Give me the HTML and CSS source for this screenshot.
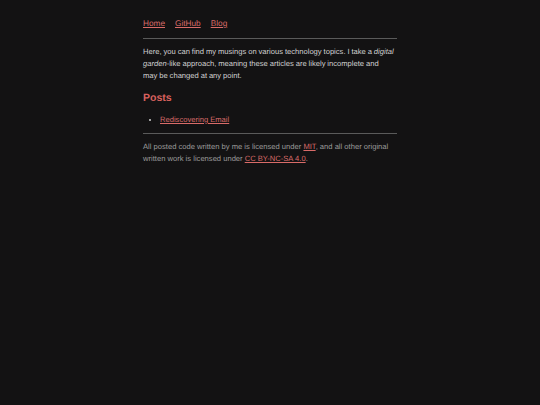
FILE: index.html
```html
<!DOCTYPE html>
<html>
<head>
<meta charset="utf-8">
<link rel="stylesheet" href="styles.css">
</head>
<body>
<main class="page">
  <nav class="nav">
    <a href="#">Home</a>
    <a href="#">GitHub</a>
    <a href="#">Blog</a>
  </nav>
  <hr class="rule rule-top">
  <p class="intro">Here, you can find my musings on various technology topics. I take a <em>digital garden</em>-like approach, meaning these articles are likely incomplete and may be changed at any point.</p>
  <h2 class="heading">Posts</h2>
  <ul class="posts">
    <li><a href="#">Rediscovering Email</a></li>
  </ul>
  <hr class="rule">
  <p class="footer">All posted code written by me is licensed under <a href="#">MIT</a>, and all other original written work is licensed under <a href="#">CC BY-NC-SA 4.0</a>.</p>
</main>
</body>
</html>
```
FILE: styles.css
```css
html, body {
  margin: 0;
  padding: 0;
  background: #131213;
}
body {
  font-family: "Liberation Sans", Arial, sans-serif;
  font-size: 7.6px;
  line-height: 12px;
  color: #d0d0d0;
  text-rendering: geometricPrecision;
}
.page {
  width: 254px;
  margin: 0 auto;
  padding-top: 18px;
}
a {
  color: #d96b69;
  text-decoration: underline;
}
.nav {
  display: flex;
  gap: 10px;
  font-size: 8.25px;
}
.rule {
  border: 0;
  border-top: 1px solid #5a5a5a;
  margin: 7px 0 7px;
}
.rule-top {
  margin-top: 8px;
}
.intro {
  margin: 0;
  padding-right: 2.5px;
  word-spacing: -0.2px;
}
.heading {
  color: #d9615f;
  font-size: 10.5px;
  line-height: 12px;
  margin: 10px 0 10px;
}
.posts {
  margin: 0 0 7px;
  padding-left: 17px;
}
.footer {
  margin: 0;
  color: #9a9a9a;
}
```
